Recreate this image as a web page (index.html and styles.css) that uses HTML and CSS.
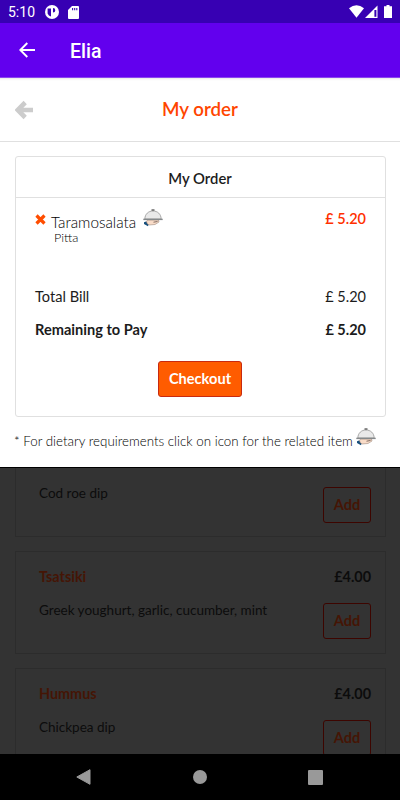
FILE: index.html
```html
<!DOCTYPE html>
<html lang="en">
<head>
    <meta charset="UTF-8">
    <meta name="viewport" content="width=device-width, initial-scale=1.0">
    <title>Elia - My order</title>
    <link rel="stylesheet" href="styles.css">
</head>
<body>
    <svg class="defs" width="0" height="0">
        <symbol id="dish" viewBox="0 0 20 18">
            <path d="M1 13.2 L3 12.6 L6 14.5 L5 17.2 L1 15 Z" fill="#164f7c"/>
            <path d="M3.5 12 L5 11 H15.5 L16 13 L12 15.5 L6 16 L4 14.4 Z" fill="#f9dcc8" stroke="#8b7468" stroke-width=".5"/>
            <path d="M10.5 13.2 L14.5 12.5" stroke="#4c3a34" stroke-width=".7"/>
            <path d="M1.8 10 C2 5 5.4 2 10 2 S18 5 18.2 10 Z" fill="#e9e9e9" stroke="#888" stroke-width=".7"/>
            <path d="M8.5 1 H11.5" stroke="#444" stroke-width="1.2"/>
            <path d="M.3 10.4 H19.7" stroke="#85898b" stroke-width="1.4"/>
        </symbol>
    </svg>

    <div class="screen">
        <div class="status-bar">
            <span class="time">5:10</span>
            <svg class="status-app" width="14" height="14" viewBox="0 0 14 14">
                <circle cx="7" cy="7" r="7" fill="#fff"/>
                <path d="M2.6 3.4 H6 V11.4 A4.8 4.8 0 0 1 2.6 8.4 Z M8 3 A2.3 2.3 0 0 1 8 7.6 Z" fill="#3700b3"/>
            </svg>
            <svg class="status-card" width="11" height="13" viewBox="0 0 11 13">
                <path d="M4 0 H10 Q11 0 11 1 V12 Q11 13 10 13 H1 Q0 13 0 12 V4 Z" fill="#fff"/>
                <path d="M4.6 2 V4.3 M6.7 2 V4.3 M8.8 2 V4.3" stroke="#3700b3" stroke-width="1.1"/>
            </svg>
            <svg class="status-right" width="44" height="14" viewBox="0 0 44 14">
                <path d="M0 3.2 Q7.5 -2.6 15 3.2 L7.5 12.8 Z" fill="#fff"/>
                <path d="M28.5 .5 V13 H16 Z" fill="#fff"/>
                <path d="M25.4 5 H27.4 V11.8 H25.4 Z" fill="#3700b3"/>
                <path d="M37.5 0 H40.5 V1.2 H43 V13 H35 V1.2 H37.5 Z" fill="#fff"/>
            </svg>
        </div>

        <div class="app-bar">
            <svg class="app-back" width="16" height="16" viewBox="0 0 16 16">
                <path d="M16 8 H1.5 M8.3 1 L1.3 8 L8.3 15" fill="none" stroke="#fff" stroke-width="1.9"/>
            </svg>
            <span class="app-title">Elia</span>
        </div>

        <div class="order">
            <div class="order-top">
                <svg class="order-back" width="19" height="20" viewBox="0 0 19 20">
                    <path d="M18 10 H5 M10.2 2.5 L2.7 10 L10.2 17.5" fill="none" stroke="#ccc" stroke-width="4.6"/>
                </svg>
                <h1>My order</h1>
            </div>

            <div class="order-card">
                <h2>My Order</h2>
                <div class="order-body">
                    <div class="line item">
                        <svg class="remove" width="11" height="11" viewBox="0 0 11 11">
                            <path d="M1.5 1.5 L9.5 9.5 M9.5 1.5 L1.5 9.5" stroke="#ff4d00" stroke-width="3.2"/>
                        </svg>
                        <div class="item-text">
                            <div class="item-name">Taramosalata</div>
                            <div class="item-option">Pitta</div>
                        </div>
                        <svg class="dish" width="20" height="18"><use href="#dish"/></svg>
                        <span class="price item-price">£ 5.20</span>
                    </div>
                    <div class="line total">
                        <span>Total Bill</span>
                        <span class="price">£ 5.20</span>
                    </div>
                    <div class="line remaining">
                        <span>Remaining to Pay</span>
                        <span class="price">£ 5.20</span>
                    </div>
                    <button class="checkout">Checkout</button>
                </div>
            </div>

            <div class="note">
                <span>* For dietary requirements click on icon for the related item</span>
                <svg class="dish" width="20" height="18"><use href="#dish"/></svg>
            </div>
        </div>

        <div class="menu">
            <div class="menu-card menu-card-cut">
                <div class="menu-row">
                    <span class="menu-desc">Cod roe dip</span>
                    <button class="add">Add</button>
                </div>
            </div>
            <div class="menu-card">
                <div class="menu-row">
                    <span class="menu-name">Tsatsiki</span>
                    <span class="menu-price">£4.00</span>
                </div>
                <div class="menu-row">
                    <span class="menu-desc">Greek youghurt, garlic, cucumber, mint</span>
                    <button class="add">Add</button>
                </div>
            </div>
            <div class="menu-card">
                <div class="menu-row">
                    <span class="menu-name">Hummus</span>
                    <span class="menu-price">£4.00</span>
                </div>
                <div class="menu-row">
                    <span class="menu-desc">Chickpea dip</span>
                    <button class="add">Add</button>
                </div>
            </div>
        </div>

        <div class="nav-bar">
            <svg width="15" height="16" viewBox="0 0 15 16"><path d="M14 .7 V15.3 L.8 8 Z" fill="#999" stroke="#999" stroke-linejoin="round"/></svg>
            <svg width="14" height="14" viewBox="0 0 14 14"><circle cx="7" cy="7" r="7" fill="#999"/></svg>
            <svg width="15" height="15" viewBox="0 0 15 15"><rect width="15" height="15" rx="1" fill="#999"/></svg>
        </div>
    </div>
</body>
</html>
```

FILE: styles.css
```css
* { box-sizing: border-box; }
body { margin: 0; font-family: Lato, "Liberation Sans", sans-serif; font-size: 14px; line-height: 20px; color: #1c1c1c; background: #fff; }
h1, h2 { margin: 0; }
svg { display: block; flex: none; }
.defs { position: absolute; }
.screen { width: 400px; height: 800px; display: flex; flex-direction: column; overflow: hidden; }

.status-bar { flex: none; height: 23px; display: flex; align-items: center; padding: 1px 7px 0 8px; background: #3700b3; color: #fff; font-family: Roboto, sans-serif; font-size: 14px; }
.time { width: 37px; }
.status-card { margin-left: 9px; }
.status-right { margin-left: auto; }

.app-bar { flex: none; height: 55px; display: flex; align-items: center; padding: 0 19px; background: #6200ee; border-bottom: 1px solid #8a45ee; color: #fff; }
.app-title { margin: 3px 0 0 35px; font: 500 19.5px/24px Roboto, sans-serif; }

.order { flex: none; height: 389px; background: #fff; }
.order-top { height: 64px; display: grid; grid-template-columns: 20px 1fr 20px; align-items: center; padding: 0 15px 2px 15px; border-bottom: 1px solid #e0e0e0; box-shadow: inset 0 3px 3px -3px #ccc; }
.order-back { margin-top: 2px; }
h1 { font-size: 18.7px; font-weight: 600; text-align: center; color: #ff4500; }

.order-card { height: 261px; margin: 14px 14px 0 15px; border: 1px solid #e0e0e0; border-radius: 3px; }
h2 { height: 41px; padding-right: 1px; border-bottom: 1px solid #e0e0e0; font-size: 14.8px; font-weight: 600; line-height: 42px; text-align: center; }
.order-body { display: flex; flex-direction: column; padding: 0 19px; font-size: 14.6px; }
.line { display: flex; justify-content: space-between; }
.item { height: 78px; padding-top: 11px; }
.remove { margin-top: 5px; }
.item-text { margin: 3px 0 0 5px; color: #000; }
.item-name { font-size: 15.3px; font-weight: 300; line-height: 20px; }
.item-option { margin: -1px 0 0 3px; font-size: 12.6px; font-weight: 300; line-height: 14px; }
.item .dish { margin-left: 7px; }
.item-price { margin-left: auto; color: #ff3000; font-weight: 600; }
.price { font-size: 14.5px; }
.total { height: 33px; padding-top: 11px; }
.remaining { height: 52px; padding-top: 11px; font-weight: 700; }
.total, .remaining { align-items: flex-start; }
.checkout { align-self: center; width: 84px; height: 36px; margin-right: 1px; padding: 0 0 1px; background: #ff5c00; border: 1px solid #c82a10; border-radius: 3px; color: #fff; font: 700 14.6px Lato, sans-serif; }

.note { display: flex; align-items: flex-start; justify-content: space-between; margin: 11px 24px 0 14px; color: #000; font-size: 13.35px; font-weight: 300; white-space: nowrap; }
.note span { padding-top: 3px; }

.menu { flex: none; height: 287px; overflow: hidden; padding: 0 14px 0 15px; background: #333; border-top: 1px solid #000; color: #0c0c0c; }
.menu-card { height: 103px; margin-bottom: 14px; padding: 15px 14px 0 23px; border: 1px solid #2c2c2c; font-size: 14.4px; }
.menu-card-cut { height: 69px; padding-top: 19px; border-top: 0; }
.menu-row { display: flex; justify-content: space-between; }
.menu-row + .menu-row { margin-top: 16px; }
.menu-name, .menu-price { font-weight: 700; }
.menu-name { color: #451505; }
.menu-desc { font-size: 13.5px; margin-top: -3px; }
.menu-card-cut .menu-desc { margin-top: -4px; }
.add { width: 48px; height: 36px; padding: 0 0 1px; background: none; border: 1px solid #3d0500; border-radius: 3px; color: #451505; font: 700 14.5px Lato, sans-serif; }

.nav-bar { flex: none; height: 46px; display: flex; align-items: center; justify-content: space-between; padding: 0 77px 0 76px; background: #000; }
```
